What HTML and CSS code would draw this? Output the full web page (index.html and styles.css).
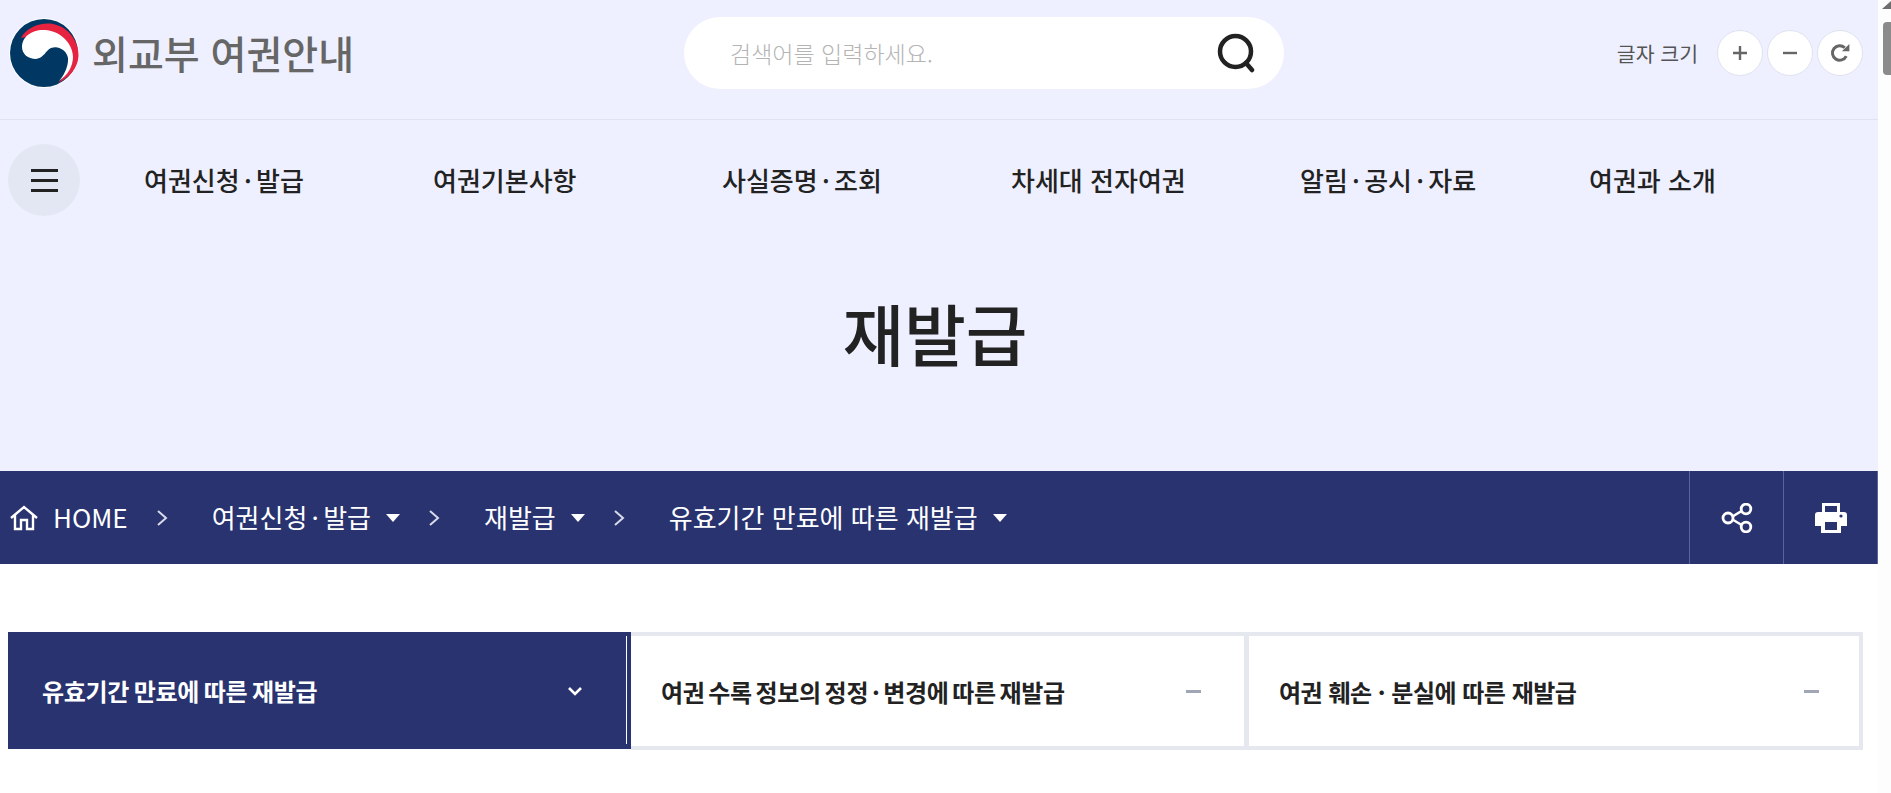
FILE: index.html
```html
<!DOCTYPE html>
<html lang="ko">
<head>
  <meta charset="UTF-8">
  <title>재발급 - 외교부 여권안내</title>
  <link rel="stylesheet" href="styles.css">
</head>
<body>
  <div class="page">
    <div class="hero">
      <!-- 상단 -->
      <header class="top">
        <a class="logo">
          <svg class="logo-mark" viewBox="0 0 70 70">
            <circle cx="35" cy="35" r="35" fill="#fff"/>
            <circle cx="35" cy="35" r="34" fill="#003763"/>
            <path d="M12 20C18 9 32 4 44 6C60 9 70 24 69.5 38C69 50 60 60 49 65C58 56 64 48 64 39C60 25 30 15 12 20Z" fill="#e8233f"/>
            <path d="M13 29C13 18 24 11 36 12C52 13 64 26 64 39C64 48 59 57 50 63C57 55 59.5 46 59 40C58 33 50 27 42 30C37 32 35 40 27 41C19 41 13 36 13 29Z" fill="#fff"/>
          </svg>
          <span class="logo-text">외교부 여권안내</span>
        </a>
        <div class="search">
          <span class="search-hint">검색어를 입력하세요.</span>
          <svg class="search-icon" viewBox="0 0 38 40">
            <circle cx="18.5" cy="18.5" r="15.5" fill="none" stroke="#222" stroke-width="4.5"/>
            <path d="M29 30L35 37" stroke="#222" stroke-width="4.5" stroke-linecap="round"/>
          </svg>
        </div>
        <div class="font-size">
          <span class="font-label">글자 크기</span>
          <button class="round-btn">
            <svg viewBox="0 0 16 16"><path d="M8 1V15M1 8H15" stroke="#666" stroke-width="2.4"/></svg>
          </button>
          <button class="round-btn">
            <svg viewBox="0 0 16 16"><path d="M1 8H15" stroke="#666" stroke-width="2.4"/></svg>
          </button>
          <button class="round-btn">
            <svg class="reload" viewBox="0 0 16 16"><path d="M13 10.5A5.8 5.8 0 1 1 11.8 3.8" fill="none" stroke="#666" stroke-width="2.4"/><path d="M9.5 6.5H15.5V0.8Z" fill="#666"/></svg>
          </button>
        </div>
      </header>

      <!-- 메뉴 -->
      <nav class="gnb">
        <button class="menu-btn"><i></i><i></i><i></i></button>
        <ul class="gnb-list">
          <li>여권신청 · 발급</li>
          <li>여권기본사항</li>
          <li>사실증명 · 조회</li>
          <li class="spaced">차세대 전자여권</li>
          <li>알림 · 공시 · 자료</li>
          <li class="spaced">여권과 소개</li>
        </ul>
      </nav>

      <h1 class="page-title">재발급</h1>
    </div>

    <!-- 경로 -->
    <div class="crumbs">
      <svg class="home-icon" viewBox="0 0 30 26">
        <path d="M2 13L15 2L28 13M6 10V24H12V15H18V24H24V10" fill="none" stroke="#fff" stroke-width="2.4"/>
      </svg>
      <span class="crumb home">HOME</span>
      <svg class="sep" viewBox="0 0 12 16"><path d="M2 1L10 8L2 15" fill="none" stroke="#d8daea" stroke-width="2"/></svg>
      <span class="crumb">여권신청 · 발급</span>
      <i class="caret"></i>
      <svg class="sep" viewBox="0 0 12 16"><path d="M2 1L10 8L2 15" fill="none" stroke="#d8daea" stroke-width="2"/></svg>
      <span class="crumb">재발급</span>
      <i class="caret"></i>
      <svg class="sep" viewBox="0 0 12 16"><path d="M2 1L10 8L2 15" fill="none" stroke="#d8daea" stroke-width="2"/></svg>
      <span class="crumb home">유효기간 만료에 따른 재발급</span>
      <i class="caret"></i>
      <div class="crumb-tools">
        <button class="tool-btn">
          <svg viewBox="0 0 32 30" width="32" height="30">
            <path d="M9 15L24 6M9 15L24 24" stroke="#fff" stroke-width="2.6"/>
            <circle cx="7" cy="15" r="5" fill="#28336f" stroke="#fff" stroke-width="2.8"/>
            <circle cx="25" cy="6" r="4.8" fill="#28336f" stroke="#fff" stroke-width="2.8"/>
            <circle cx="25" cy="24" r="4.8" fill="#28336f" stroke="#fff" stroke-width="2.8"/>
          </svg>
        </button>
        <button class="tool-btn">
          <svg viewBox="0 0 32 32" width="32" height="32">
            <path d="M7 10V1H25V10H29Q32 10 32 13V24H26V31H6V24H0V13Q0 10 3 10ZM10 4V10H22V4ZM10 20V28H22V20Z" fill="#fff" fill-rule="evenodd"/>
            <circle cx="26" cy="14" r="1.6" fill="#28336f"/>
          </svg>
        </button>
      </div>
    </div>

    <!-- 탭 -->
    <main class="content">
      <ul class="tabs">
        <li class="tab active">
          <span>유효기간 만료에 따른 재발급</span>
          <svg class="tab-mark" viewBox="0 0 16 10"><path d="M2 2L8 8L14 2" fill="none" stroke="#fff" stroke-width="2.6"/></svg>
        </li>
        <li class="tab">
          <span>여권 수록 정보의 정정 · 변경에 따른 재발급</span>
          <i class="tab-dash"></i>
        </li>
        <li class="tab">
          <span>여권 훼손 · 분실에 따른 재발급</span>
          <i class="tab-dash"></i>
        </li>
      </ul>
    </main>
  </div>

  <!-- 스크롤바 -->
  <div class="scrollbar">
    <i class="scroll-arrow"></i>
    <i class="scroll-thumb"></i>
  </div>
</body>
</html>
```

FILE: styles.css
```css
* { box-sizing: border-box; }
html, body {
  height: 793px;
  overflow: hidden;
}
body {
  display: flex;
  margin: 0;
  background: #fff;
  color: #222;
  font-family: "Noto Sans CJK KR", "Noto Sans", sans-serif;
}
ul {
  margin: 0;
  padding: 0;
  list-style: none;
}
button {
  padding: 0;
  border: none;
  cursor: pointer;
}
.page {
  flex: 1;
  min-width: 0;
}
.hero {
  height: 471px;
  background: #eef0ff;
}

.top {
  display: grid;
  grid-template-columns: 684px 600px 1fr;
  align-items: center;
  height: 120px;
  padding-bottom: 14px;
  border-bottom: 1px solid #dfe2ef;
}
.logo {
  display: flex;
  align-items: center;
  padding-left: 9px;
}
.logo-mark {
  width: 70px;
  height: 70px;
}
.logo-text {
  margin-left: 13px;
  color: #666;
  font-size: 39px;
  font-weight: 500;
  line-height: 1;
  white-space: nowrap;
}
.search {
  display: flex;
  align-items: center;
  justify-content: space-between;
  height: 72px;
  padding: 0 29px 0 46px;
  border-radius: 36px;
  background: #fff;
}
.search-hint {
  color: #b4b4b4;
  font-size: 23px;
  font-weight: 300;
}
.search-icon {
  width: 38px;
  height: 40px;
}
.font-size {
  display: flex;
  align-items: center;
  justify-content: flex-end;
  gap: 4px;
  padding-right: 15px;
}
.font-label {
  margin-right: 15px;
  color: #555;
  font-size: 20.5px;
}
.round-btn {
  display: flex;
  align-items: center;
  justify-content: center;
  width: 46px;
  height: 46px;
  border: 1px solid #dfe2ef;
  border-radius: 50%;
  background: #fff;
}
.round-btn svg {
  width: 16px;
  height: 16px;
}
.round-btn .reload {
  width: 20px;
  height: 20px;
}

.gnb {
  display: flex;
  align-items: center;
  height: 96px;
  padding: 24px 0 0 8px;
}
.menu-btn {
  display: flex;
  flex-direction: column;
  align-items: center;
  justify-content: center;
  gap: 7px;
  width: 72px;
  height: 72px;
  border-radius: 50%;
  background: #e3e6f3;
}
.menu-btn i {
  width: 27px;
  height: 3px;
  background: #222;
}
.gnb-list {
  display: flex;
  margin: 0 0 2px 64px;
}
.gnb-list li {
  width: 289px;
  font-size: 26px;
  font-weight: 500;
  white-space: nowrap;
  word-spacing: -3px;
}
.gnb-list .spaced {
  word-spacing: normal;
}
.page-title {
  margin: 0;
  padding: 38px 8px 0 0;
  color: #222;
  font-size: 67px;
  font-weight: 500;
  line-height: 156px;
  text-align: center;
}

.crumbs {
  display: flex;
  align-items: center;
  height: 93px;
  padding-left: 9px;
  background: #28336f;
  color: #fff;
}
.home-icon {
  width: 30px;
  height: 26px;
  margin-right: 14px;
}
.crumb {
  padding-bottom: 2px;
  font-size: 26px;
  white-space: nowrap;
  word-spacing: -3px;
}
.crumb.home {
  word-spacing: normal;
}
.sep {
  width: 12px;
  height: 16px;
  margin: 0 44px 0 28px;
}
.caret {
  width: 0;
  height: 0;
  margin-left: 15px;
  border-top: 8px solid #fff;
  border-left: 7px solid transparent;
  border-right: 7px solid transparent;
}
.caret + .sep {
  margin-left: 28px;
}
.crumb-tools {
  display: flex;
  align-self: stretch;
  margin-left: auto;
  border-right: 1px solid #5a649b;
}
.tool-btn {
  display: flex;
  align-items: center;
  justify-content: center;
  width: 94px;
  border-left: 1px solid #5a649b;
  background: transparent;
}

.content {
  padding: 68px 15px 0 8px;
}
.tabs {
  display: grid;
  grid-template-columns: 623px 1fr 614px;
  height: 118px;
}
.tab {
  display: flex;
  align-items: center;
  justify-content: space-between;
  padding: 0 43px 0 30px;
  border: solid #e5e8ef;
  border-width: 4px 5px 4px 0;
  font-size: 24px;
  font-weight: 700;
  letter-spacing: -0.3px;
  word-spacing: -2.7px;
  white-space: nowrap;
}
.tab:last-child {
  padding-right: 40px;
  border-right-width: 4px;
  letter-spacing: -0.5px;
  word-spacing: 0;
}
.tab.active {
  position: relative;
  align-self: start;
  height: 117px;
  padding: 0 48px 0 34px;
  border: none;
  background: #28336f;
  color: #fff;
  word-spacing: -1.8px;
}
/* 활성 탭 오른쪽의 흰 선 */
.tab.active::after {
  content: "";
  position: absolute;
  top: 4px;
  bottom: 5px;
  right: 4px;
  width: 1px;
  background: #fff;
}
.tab-mark {
  width: 16px;
  height: 10px;
}
.tab-dash {
  width: 15px;
  height: 3px;
  background: #a0a6b5;
}

.scrollbar {
  flex: none;
  width: 13px;
  height: 793px;
  padding: 1px 0 0 4px;
  background: #fdfdfd;
}
.scroll-arrow {
  display: block;
  width: 0;
  height: 0;
  border-bottom: 8px solid #6e6e6e;
  border-left: 9px solid transparent;
}
.scroll-thumb {
  display: block;
  width: 9px;
  height: 53px;
  margin: 13px 0 0 1px;
  border-radius: 4px 0 0 4px;
  background: #8b8b8b;
}
```
